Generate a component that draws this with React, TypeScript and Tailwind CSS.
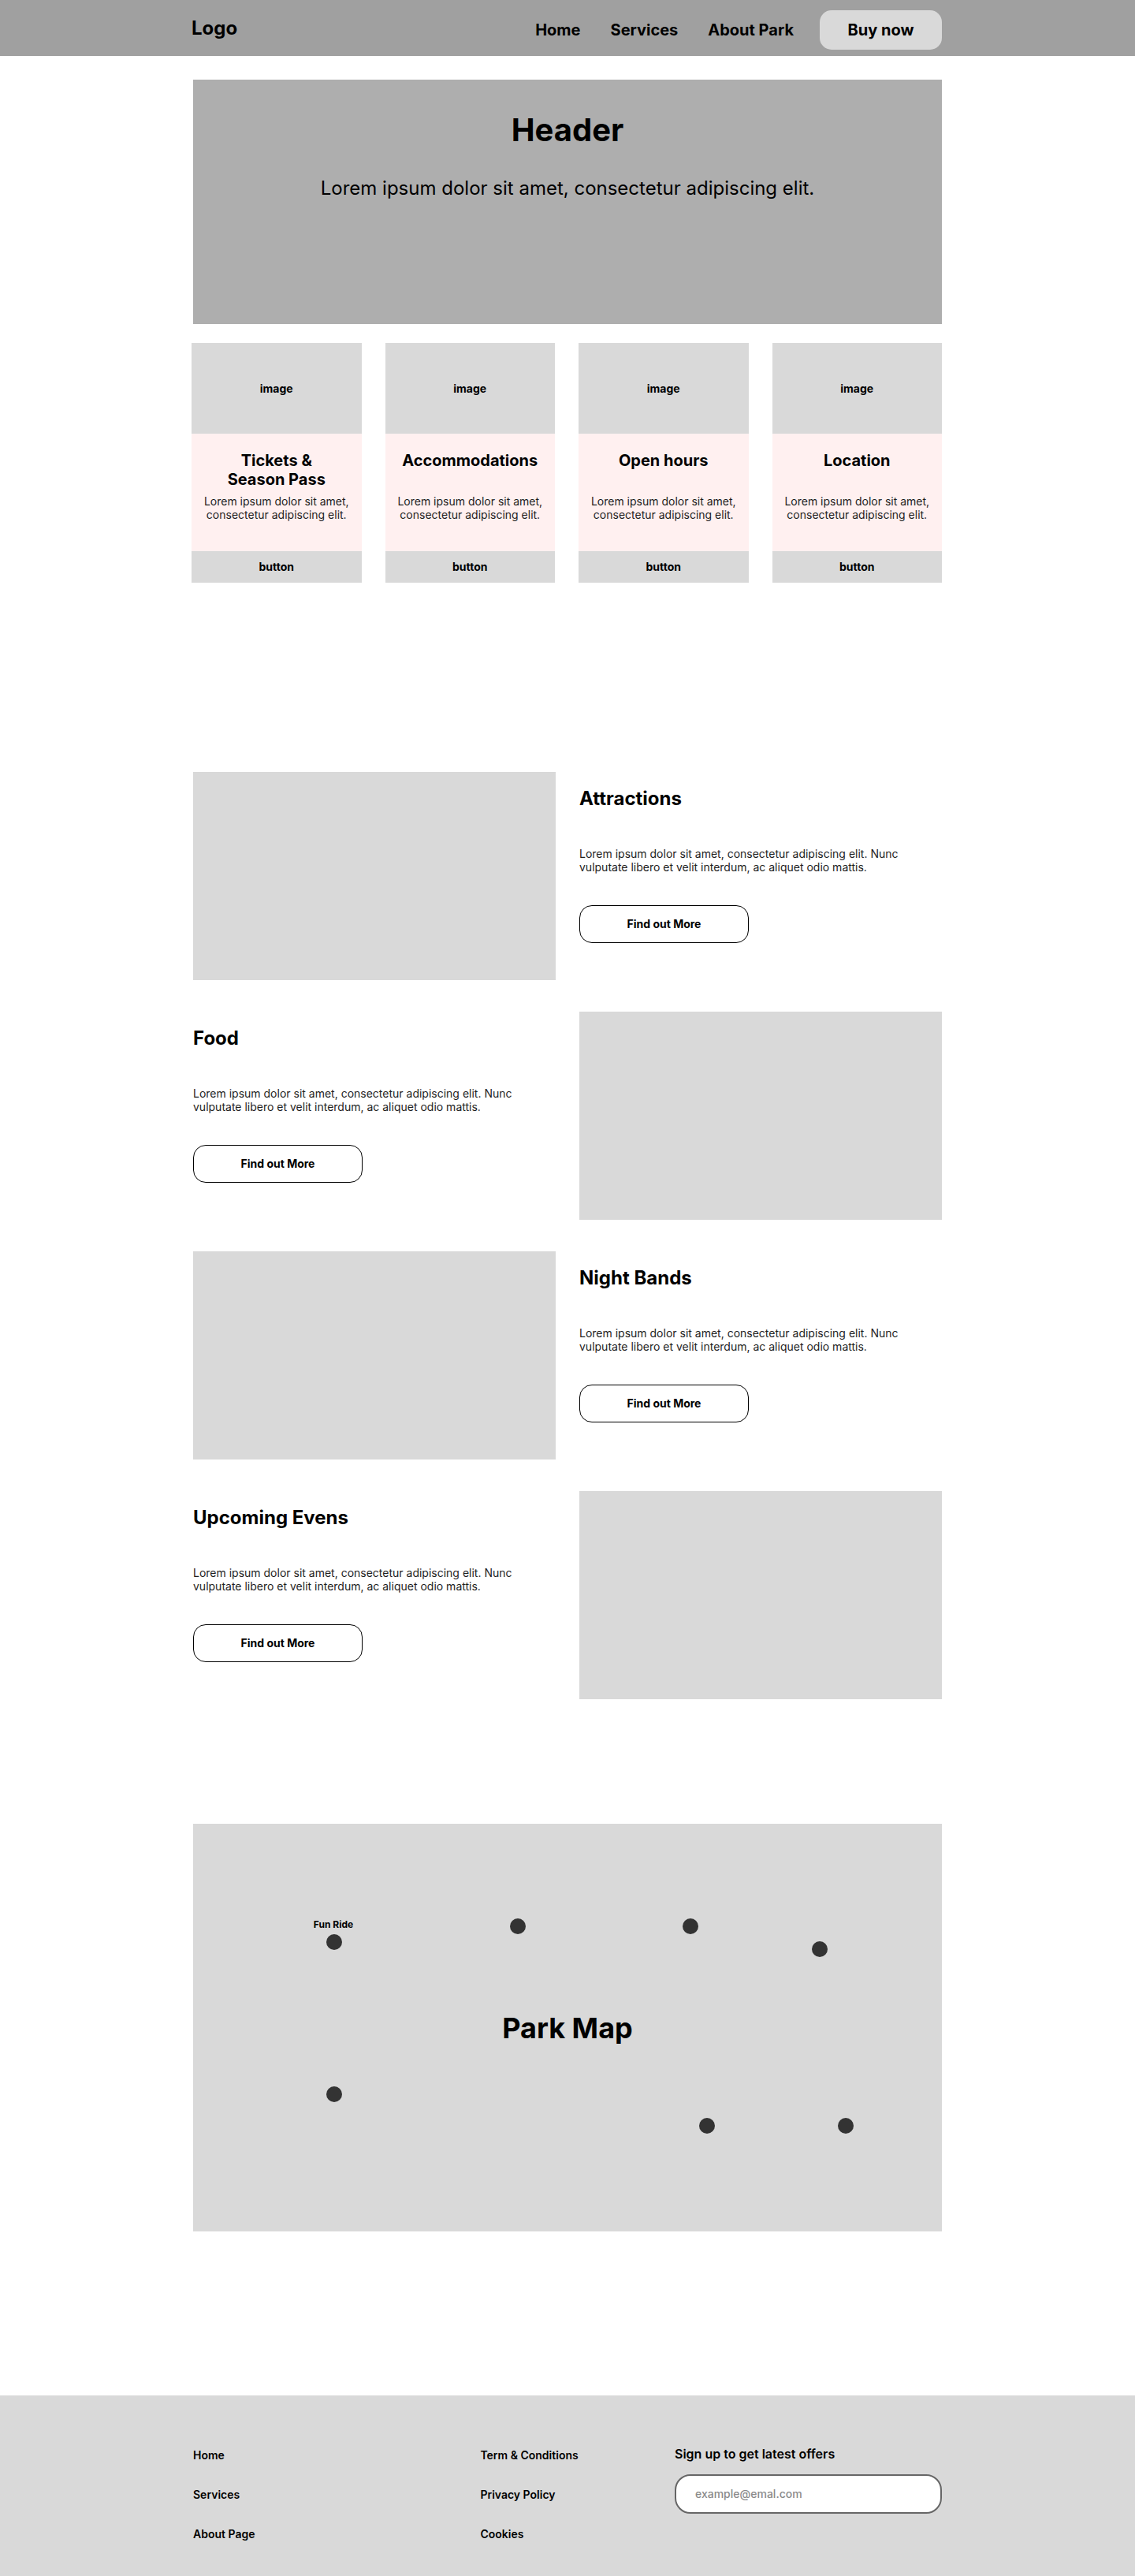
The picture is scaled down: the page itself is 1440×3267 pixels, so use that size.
import React from "react";

const cards = [
  { title: <>Tickets &amp;<br />Season Pass</> },
  { title: <>Accommodations</> },
  { title: <>Open hours</> },
  { title: <>Location</> },
];

const features = [
  { title: "Attractions", imageLeft: true },
  { title: "Food", imageLeft: false },
  { title: "Night Bands", imageLeft: true },
  { title: "Upcoming Evens", imageLeft: false },
];

const dots = [
  { left: "left-[169px]", top: "top-[140px]" },
  { left: "left-[402px]", top: "top-[120px]" },
  { left: "left-[621px]", top: "top-[120px]" },
  { left: "left-[785px]", top: "top-[149px]" },
  { left: "left-[169px]", top: "top-[333px]" },
  { left: "left-[642px]", top: "top-[373px]" },
  { left: "left-[818px]", top: "top-[373px]" },
];

function FeatureText({ title }: { title: string }) {
  return (
    <div className="pt-[19px]">
      <h2 className="text-2xl leading-[29px] font-bold">{title}</h2>
      <p className="mt-[47px] max-w-[440px] text-sm leading-[17px] text-[#1e1e1e]">
        Lorem ipsum dolor sit amet, consectetur adipiscing elit. Nunc vulputate libero et velit interdum, ac aliquet odio mattis.
      </p>
      <button className="mt-[40px] w-[215px] h-12 border border-black rounded-[16px] text-sm font-bold bg-white">
        Find out More
      </button>
    </div>
  );
}

export default function App() {
  return (
    <div className="min-h-[3267px] bg-white text-black font-['Inter',sans-serif] flex flex-col">
      {/* Navbar */}
      <nav className="h-[71px] bg-[#a0a0a0] shrink-0">
        <div className="mx-auto w-[950px] h-full flex items-center justify-between">
          <div className="-ml-[2px] text-2xl leading-[29px] font-bold">Logo</div>
          <div className="flex items-center mt-[5px]">
            <div className="flex items-center gap-[38px] text-xl leading-6 font-bold">
              <a>Home</a>
              <a>Services</a>
              <a>About Park</a>
            </div>
            <button className="ml-[33px] w-[155px] h-[50px] rounded-[15px] bg-[#d9d9d9] text-xl font-bold">
              Buy now
            </button>
          </div>
        </div>
      </nav>

      {/* Header */}
      <section className="mx-auto mt-[30px] w-[950px] h-[310px] bg-[#aeaeae] flex flex-col items-center pt-[40px]">
        <h1 className="text-[40px] leading-[48px] font-bold">Header</h1>
        <p className="mt-[35px] text-2xl leading-[29px]">
          Lorem ipsum dolor sit amet, consectetur adipiscing elit.
        </p>
      </section>

      {/* Cards */}
      <section className="mx-auto mt-[24px] w-[950px]">
        <div className="-ml-[2px] grid grid-cols-4 gap-[30px]">
          {cards.map((c, i) => (
            <div key={i} className="flex flex-col">
              <div className="h-[115px] bg-[#d9d9d9] flex items-center justify-center text-sm font-bold">
                image
              </div>
              <div className="h-[149px] bg-[#fff0f0] pt-[22px] px-3 text-center">
                <h3 className="h-[48px] text-xl leading-6 font-bold">{c.title}</h3>
                <p className="mt-[7px] text-sm leading-[17px] text-[#1e1e1e]">
                  Lorem ipsum dolor sit amet, consectetur adipiscing elit.
                </p>
              </div>
              <div className="h-10 bg-[#d9d9d9] flex items-center justify-center text-sm font-bold">
                button
              </div>
            </div>
          ))}
        </div>
      </section>

      {/* Features */}
      <section className="mx-auto mt-[240px] w-[950px] flex flex-col gap-[40px]">
        {features.map((f) =>
          f.imageLeft ? (
            <div key={f.title} className="grid grid-cols-2 gap-[30px] h-[264px]">
              <div className="bg-[#d9d9d9] h-[264px]" />
              <FeatureText title={f.title} />
            </div>
          ) : (
            <div key={f.title} className="grid grid-cols-2 gap-[30px] h-[264px]">
              <FeatureText title={f.title} />
              <div className="bg-[#d9d9d9] h-[264px]" />
            </div>
          )
        )}
      </section>

      {/* Park map */}
      <section className="mx-auto mt-[158px] w-[950px] h-[517px] bg-[#d9d9d9] relative flex items-center justify-center">
        <h2 className="text-[36px] leading-[44px] font-bold">Park Map</h2>
        <span className="absolute left-[138px] top-[120px] w-[80px] whitespace-nowrap text-center text-xs leading-[15px] font-bold">
          Fun Ride
        </span>
        {dots.map((d, i) => (
          <span key={i} className={`absolute ${d.left} ${d.top} w-5 h-5 rounded-full bg-[#333333]`} />
        ))}
      </section>

      {/* Footer */}
      <footer className="mt-[208px] h-[229px] bg-[#d9d9d9] shrink-0">
        <div className="mx-auto w-[950px] flex pt-[67px]">
          <div className="w-[365px] flex flex-col gap-[33px] text-sm leading-[17px] font-semibold">
            <a>Home</a>
            <a>Services</a>
            <a>About Page</a>
          </div>
          <div className="w-[247px] flex flex-col gap-[33px] text-sm leading-[17px] font-semibold">
            <a>Term &amp; Conditions</a>
            <a>Privacy Policy</a>
            <a>Cookies</a>
          </div>
          <div className="w-[339px] -mt-[2px] flex flex-col">
            <div className="text-base leading-[19px] font-semibold">Sign up to get latest offers</div>
            <div className="mt-[16px] h-[50px] w-[339px] bg-white border-2 border-[#666666] rounded-[20px] flex items-center pl-[24px] text-sm font-medium text-[#8a8a8a]">
              example@emal.com
            </div>
          </div>
        </div>
      </footer>
    </div>
  );
}
